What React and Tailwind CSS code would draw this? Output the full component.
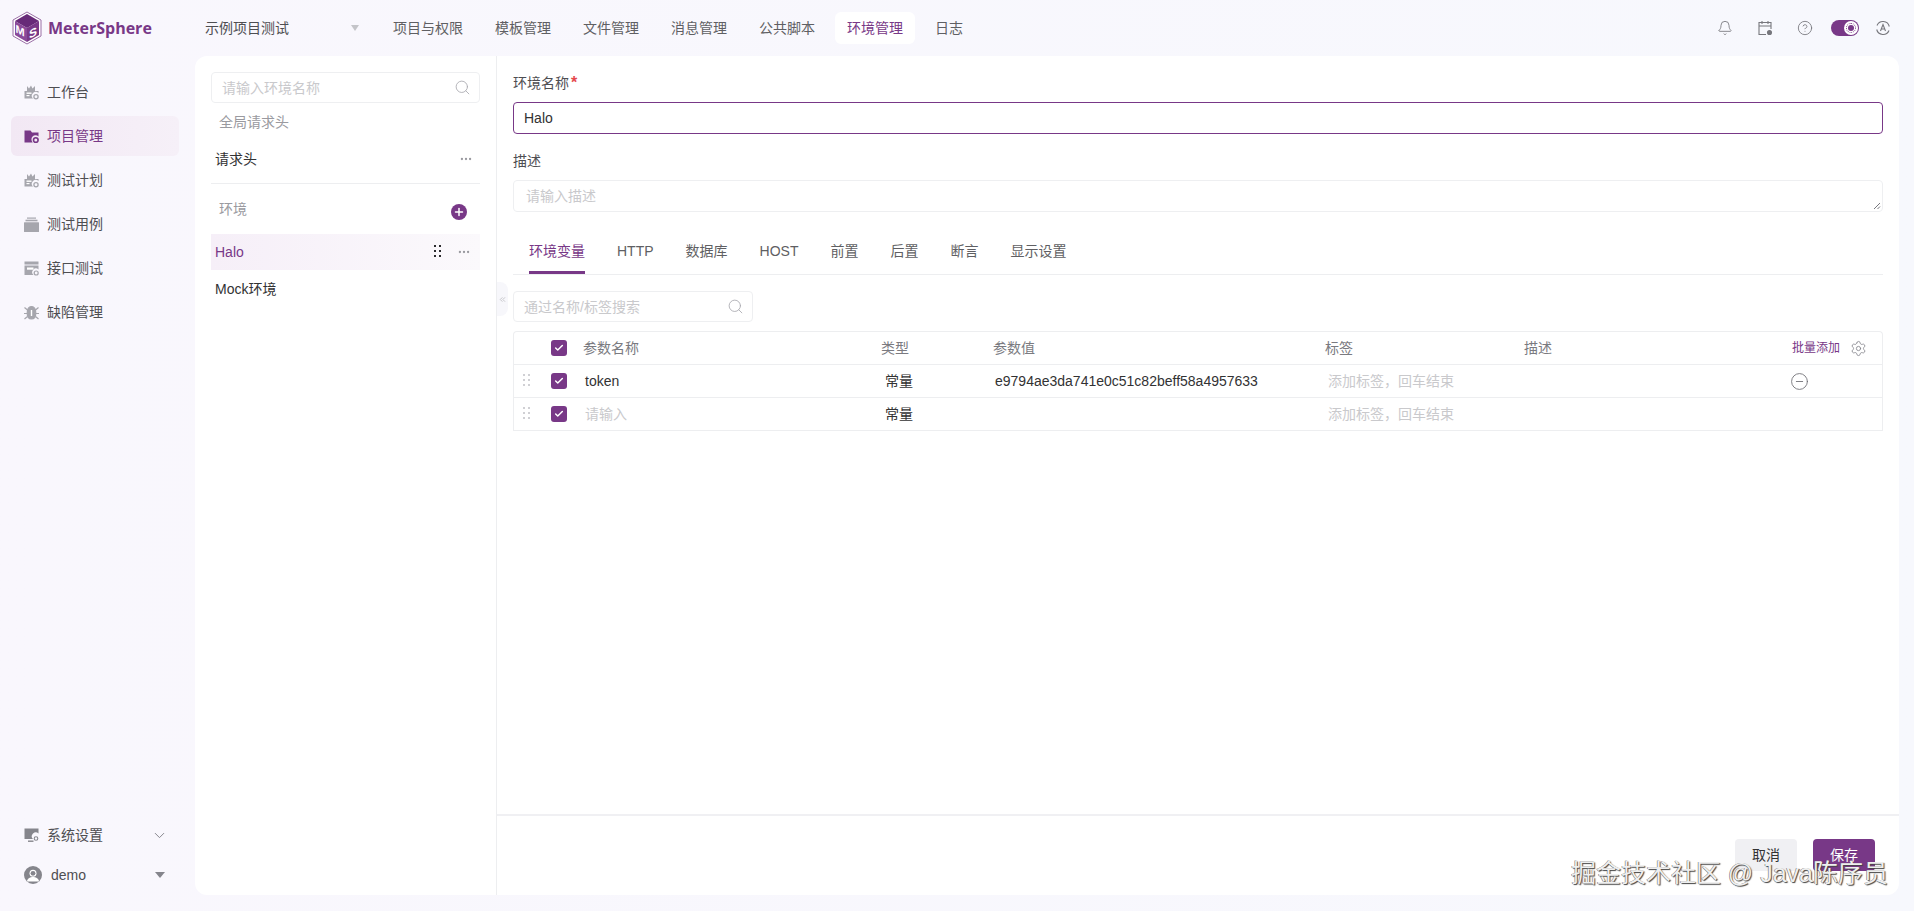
import { Bell, CircleHelp, CircleMinus, ChevronDown, Plus, Search, Settings, Check, Ellipsis, ChevronsLeft } from 'lucide-react'

const navItems = ['项目与权限', '模板管理', '文件管理', '消息管理', '公共脚本', '环境管理', '日志']
const tabs = ['环境变量', 'HTTP', '数据库', 'HOST', '前置', '后置', '断言', '显示设置']

function Logo() {
  return (
    <svg width="30" height="34" viewBox="0 0 30 34" className="shrink-0">
      <path d="M15 1 L29 9 V25 L15 33 L1 25 V9 Z" fill="#fff" stroke="#9a6ea6" strokeWidth="1" />
      <path d="M15 3 L27 10 L15 17 L3 10 Z" fill="#672a78" />
      <path d="M3 10 L15 17 V31 L3 24 Z" fill="#8a4a99" />
      <path d="M27 10 L15 17 V31 L27 24 Z" fill="#783887" />
      <text transform="translate(3.500 21) skewY(28)" fontSize="11" fontWeight="700" fill="#fff" fontFamily="Liberation Sans">M</text>
      <text transform="translate(17 28) skewY(-28)" fontSize="12" fontWeight="700" fill="#fff" fontFamily="Liberation Sans">S</text>
    </svg>
  )
}

function BenchIcon({ color = '#a6a6ad' }) {
  return (
    <svg width="15" height="15" viewBox="0 0 15 15">
      <path d="M0.500 6H3V1l2 2.500L7 0.500l1.500 3L11 1v5h3.500v2a3.600 3.600 0 0 0-5.500 5.500H0.500z" fill={color} />
      <rect x="2.500" y="7.500" width="5" height="1.400" fill="#fff" />
      <rect x="2.500" y="10" width="3" height="1.200" fill="#fff" />
      <circle cx="12" cy="11.800" r="2.100" fill="none" stroke={color} strokeWidth="1.300" />
    </svg>
  )
}

function FolderIcon() {
  return (
    <svg width="15" height="15" viewBox="0 0 15 15">
      <path d="M0.500 1.500h6l1.500 2h6.500v4a3.900 3.900 0 0 0-5.800 6H0.500z" fill="#783887" />
      <circle cx="11.800" cy="11" r="2.300" fill="none" stroke="#783887" strokeWidth="1.600" />
    </svg>
  )
}

function CaseIcon() {
  return (
    <svg width="15" height="15" viewBox="0 0 15 15" fill="#a6a6ad">
      <rect x="3" y="0.500" width="9" height="1.200" />
      <rect x="1.500" y="2.700" width="12" height="1.600" />
      <rect x="0" y="5.200" width="15" height="9.800" rx="0.500" />
    </svg>
  )
}

function ApiIcon() {
  return (
    <svg width="15" height="15" viewBox="0 0 15 15">
      <rect x="0.500" y="0.500" width="14" height="3" fill="#a6a6ad" />
      <path d="M0.500 4.500h14v4a3.600 3.600 0 0 0-5 5.500h-9z" fill="#a6a6ad" />
      <rect x="3" y="6.500" width="6.500" height="2.200" fill="#fff" />
      <circle cx="12.200" cy="12" r="2" fill="none" stroke="#a6a6ad" strokeWidth="1.200" />
    </svg>
  )
}

function BugIcon() {
  return (
    <svg width="15" height="15" viewBox="0 0 15 15" fill="none" stroke="#a6a6ad" strokeWidth="1.200">
      <path d="M7.500 1.500c2.800 0 4.300 2.500 4.300 6.500s-1.500 6-4.300 6-4.300-2-4.300-6 1.500-6.500 4.300-6.500z" fill="#a6a6ad" />
      <path d="M0.500 2.500l3 2.500M14.500 2.500l-3 2.500M0 8.500h3.500M15 8.500h-3.500M0.500 14l3-2.500M14.500 14l-3-2.500" />
      <path d="M7.500 5v6" stroke="#fff" strokeWidth="1.400" />
    </svg>
  )
}

function SystemIcon() {
  return (
    <svg width="15" height="15" viewBox="0 0 15 15">
      <path d="M0.500 0.500h14v5a3.800 3.800 0 0 0-5.500 5.500H0.500z" fill="#85858c" />
      <rect x="4" y="12.500" width="5.500" height="1.400" fill="#85858c" />
      <circle cx="12" cy="10.500" r="1.800" fill="none" stroke="#85858c" strokeWidth="1.100" />
    </svg>
  )
}

function AvatarIcon() {
  return (
    <svg width="18" height="18" viewBox="0 0 18 18">
      <circle cx="9" cy="9" r="9" fill="#85858c" />
      <circle cx="9" cy="7.300" r="3.500" fill="#fff" />
      <path d="M2.800 15.500c1-3.500 3.500-4.500 6.200-4.500s5.200 1 6.200 4.500" fill="#fff" />
      <circle cx="9" cy="7.300" r="2.400" fill="#85858c" />
    </svg>
  )
}

function Grip({ color }) {
  return (
    <svg width="8" height="14" viewBox="0 0 8 14" fill={color}>
      <rect x="0" y="0" width="2" height="2" />
      <rect x="5" y="0" width="2" height="2" />
      <rect x="0" y="5" width="2" height="2" />
      <rect x="5" y="5" width="2" height="2" />
      <rect x="0" y="10" width="2" height="2" />
      <rect x="5" y="10" width="2" height="2" />
    </svg>
  )
}

function CheckBox() {
  return (
    <div className="w-4 h-4 rounded-[3px] bg-[#783887] flex items-center justify-center">
      <Check size={10} strokeWidth={3.500} className="text-white" />
    </div>
  )
}

function SearchBox({ placeholder, className }) {
  return (
    <div className={`h-[31px] flex items-center justify-between bg-white border border-[#eeeff1] rounded-[4px] pl-[10px] pr-[8px] ${className}`}>
      <span className="text-sm text-[#c9c9cc]">{placeholder}</span>
      <Search size={17} strokeWidth={1.200} className="text-[#a9a9af]" />
    </div>
  )
}

function Header() {
  return (
    <header className="h-14 flex items-center shrink-0">
      <div className="w-[195px] flex items-center pl-3 gap-[6px]">
        <Logo />
        <span className="font-['Open_Sans',sans-serif] font-bold text-base text-[#783887]">MeterSphere</span>
      </div>
      <div className="w-[186px] pl-[10px] pr-[22px] flex items-center justify-between">
        <span className="text-sm text-[#4e4e52]">示例项目测试</span>
        <div className="w-0 h-0 border-x-[4px] border-t-[6px] border-x-transparent border-t-[#c4c4c9]" />
      </div>
      <nav className="flex items-center gap-2">
        {navItems.map((n) => (
          <div
            key={n}
            className={`h-8 px-3 flex items-center rounded-md text-sm ${n === '环境管理' ? 'bg-white text-[#783887]' : 'text-[#5f5f63]'}`}
          >
            {n}
          </div>
        ))}
      </nav>
      <div className="ml-auto flex items-center pr-[23px]">
        <Bell size={16} strokeWidth={1.300} className="text-[#77777d]" />
        <svg width="16" height="16" viewBox="0 0 16 16" fill="none" stroke="#77777d" strokeWidth="1.100" className="ml-6">
          <path d="M9 14.500H2v-12h12V9M2 6h12M5 1v3M11 1v3" />
          <circle cx="12.500" cy="12.500" r="2" fill="#77777d" />
        </svg>
        <CircleHelp size={16} strokeWidth={1.300} className="text-[#77777d] ml-6" />
        <div className="ml-[18px] w-7 h-4 rounded-full bg-[#783887] flex items-center justify-end pr-[1px]">
          <div className="w-[14px] h-[14px] rounded-full bg-white flex items-center justify-center">
            <div className="w-[6px] h-[6px] rounded-full bg-[#783887] outline-1 outline-dotted outline-[#783887] outline-offset-1" />
          </div>
        </div>
        <svg width="16" height="16" viewBox="0 0 16 16" fill="none" stroke="#77777d" strokeWidth="1.100" className="ml-4">
          <path d="M2 5.500A6.500 6.500 0 0 1 14.300 6.500M14 10.500A6.500 6.500 0 0 1 1.700 9.500" />
          <path d="M5.500 11L8 4.500l2.500 6.500M6.300 9h3.400" />
        </svg>
      </div>
    </header>
  )
}

function Sidebar() {
  const items = [
    { label: '工作台', icon: <BenchIcon /> },
    { label: '项目管理', icon: <FolderIcon />, active: true },
    { label: '测试计划', icon: <BenchIcon /> },
    { label: '测试用例', icon: <CaseIcon /> },
    { label: '接口测试', icon: <ApiIcon /> },
    { label: '缺陷管理', icon: <BugIcon /> },
  ]
  return (
    <aside className="w-[195px] shrink-0 flex flex-col pt-4 pl-[11px]">
      <div className="flex flex-col gap-1">
        {items.map((it) => (
          <div
            key={it.label}
            className={`w-[168px] h-10 flex items-center gap-2 pl-[13px] rounded-md text-sm ${it.active ? 'bg-gradient-to-r from-[#f2e8f4] to-[#f6f0f8] text-[#783887]' : 'text-[#4e4e52]'}`}
          >
            {it.icon}
            <span>{it.label}</span>
          </div>
        ))}
      </div>
      <div className="mt-auto w-[168px] pl-[13px]">
        <div className="h-10 flex items-center gap-2 text-sm text-[#4e4e52]">
          <SystemIcon />
          <span>系统设置</span>
          <ChevronDown size={17} strokeWidth={1.400} className="ml-auto mr-[11px] text-[#85858c]" />
        </div>
        <div className="h-10 flex items-center gap-[9px] text-sm text-[#4e4e52]">
          <AvatarIcon />
          <span>demo</span>
          <div className="ml-auto mr-[14px] w-0 h-0 border-x-[5px] border-t-[6px] border-x-transparent border-t-[#85858c]" />
        </div>
      </div>
    </aside>
  )
}

function EnvPanel() {
  return (
    <div className="w-[302px] shrink-0 border-r border-[#edeef0] pt-4 pl-4 pr-4">
      <SearchBox placeholder="请输入环境名称" className="w-[269px]" />
      <div className="mt-2 pl-2 leading-[22px] text-sm text-[#9a9aa0]">全局请求头</div>
      <div className="mt-2 h-9 flex items-center justify-between pl-[4px] pr-[7px] text-sm text-[#323233]">
        <span>请求头</span>
        <Ellipsis size={14} className="text-[#9a9aa0]" />
      </div>
      <div className="mt-[6px] border-t border-[#edeef0]" />
      <div className="h-[50px] flex items-center justify-between pl-2 pr-[13px] text-sm text-[#9a9aa0]">
        <span>环境</span>
        <div className="mt-[6px] w-4 h-4 rounded-full bg-[#783887] flex items-center justify-center">
          <Plus size={12} strokeWidth={3} className="text-white" />
        </div>
      </div>
      <div className="h-9 flex items-center pl-[4px] pr-[9px] text-sm text-[#783887] bg-gradient-to-r from-[#f6eff8] to-[#fbf9fc]">
        <span>Halo</span>
        <div className="ml-auto mr-[15px]">
          <Grip color="#2b2b2e" />
        </div>
        <Ellipsis size={14} className="text-[#9a9aa0]" />
      </div>
      <div className="mt-[1px] h-9 flex items-center pl-[4px] text-sm text-[#323233]">Mock环境</div>
    </div>
  )
}

function ParamTable() {
  const grid = 'grid grid-cols-[37px_32px_298px_112px_332px_199px_268px_90px] items-center h-[33px] text-sm border-b border-[#edeef0]'
  return (
    <div className="mt-[9px] border-x border-t border-[#edeef0] rounded-t-[4px]">
      <div className={`${grid} text-[#7a7a80]`}>
        <span />
        <CheckBox />
        <span>参数名称</span>
        <span>类型</span>
        <span>参数值</span>
        <span>标签</span>
        <span>描述</span>
        <div className="flex items-center gap-[10px]">
          <span className="text-xs text-[#783887]">批量添加</span>
          <Settings size={17} strokeWidth={1.200} className="text-[#85858c]" />
        </div>
      </div>
      <div className={grid}>
        <div className="pl-[9px]"><Grip color="#d0d0d4" /></div>
        <CheckBox />
        <span className="pl-[2px] text-[#323233]">token</span>
        <span className="pl-1 text-[#323233]">常量</span>
        <span className="pl-[2px] text-[#323233]">e9794ae3da741e0c51c82beff58a4957633</span>
        <span className="pl-[3px] text-[#c9c9cc]">添加标签，回车结束</span>
        <span />
        <CircleMinus size={19} strokeWidth={1.100} className="-ml-[2px] text-[#6e6e73]" />
      </div>
      <div className={grid}>
        <div className="pl-[9px]"><Grip color="#d0d0d4" /></div>
        <CheckBox />
        <span className="pl-[2px] text-[#c9c9cc]">请输入</span>
        <span className="pl-1 text-[#323233]">常量</span>
        <span />
        <span className="pl-[3px] text-[#c9c9cc]">添加标签，回车结束</span>
      </div>
    </div>
  )
}

function EnvForm() {
  return (
    <div className="flex-1 flex flex-col min-w-0 relative">
      {/* handle to collapse the list */}
      <div className="absolute left-0 top-[226px] w-[11px] h-[34px] rounded-r-lg bg-[#f7f7fb] flex items-center justify-center">
        <ChevronsLeft size={9} className="text-[#b5b5ba]" />
      </div>
      <div className="flex-1 pt-4 pl-4 pr-4">
        <div className="h-[22px] flex items-center gap-[2px] text-sm text-[#4e4e52]">
          <span>环境名称</span>
          <span className="text-base leading-none font-bold text-[#e5484d]">*</span>
        </div>
        <div className="mt-2 h-8 flex items-center pl-[10px] rounded-[4px] border border-[#783887] text-sm text-[#323233]">Halo</div>
        <div className="mt-4 leading-[22px] text-sm text-[#4e4e52]">描述</div>
        <div className="relative mt-2 h-8 flex items-center pl-3 rounded-[4px] border border-[#eeeff1] text-sm text-[#c9c9cc]">
          请输入描述
          <svg width="8" height="8" viewBox="0 0 8 8" stroke="#77777d" strokeWidth="1" className="absolute right-[1px] bottom-[1px]">
            <path d="M7 1L1 7M7 4.500L4.500 7" />
          </svg>
        </div>
        <div className="mt-[13px] h-[50px] flex gap-8 pl-4 border-b border-[#edeef0]">
          {tabs.map((t, i) => (
            <div
              key={t}
              className={`flex items-center pt-[5px] text-sm border-b-[3px] ${i === 0 ? 'text-[#783887] border-[#783887]' : 'text-[#5f5f63] border-transparent'}`}
            >
              {t}
            </div>
          ))}
        </div>
        <SearchBox placeholder="通过名称/标签搜索" className="mt-4 w-[240px]" />
        <ParamTable />
      </div>
      <div className="h-[81px] shrink-0 border-t-2 border-[#f0f0f3] pt-[23px] pr-6 flex justify-end gap-4">
        <div className="w-[62px] h-8 rounded-[4px] bg-[#f0f0f3] flex items-center justify-center text-sm text-[#323233]">取消</div>
        <div className="w-[62px] h-8 rounded-[4px] bg-[#783887] flex items-center justify-center text-sm text-white">保存</div>
      </div>
    </div>
  )
}

export default function App() {
  return (
    <div className="relative w-[1914px] h-[911px] overflow-hidden flex flex-col bg-gradient-to-r from-[#f9f7fd] to-[#f7f8fd] font-['Liberation_Sans','Noto_Sans_CJK_SC',sans-serif]">
      <Header />
      <div className="flex-1 min-h-0 flex pb-4">
        <Sidebar />
        <main className="w-[1704px] flex bg-white rounded-xl overflow-hidden">
          <EnvPanel />
          <EnvForm />
        </main>
      </div>
      <div className="absolute right-[26px] bottom-[22px] text-[25px] leading-8 text-[#efefef] [text-shadow:1px_1px_1px_#444,-0.5px_-0.5px_0.5px_#666]">
        掘金技术社区 @ Java陈序员
      </div>
    </div>
  )
}
